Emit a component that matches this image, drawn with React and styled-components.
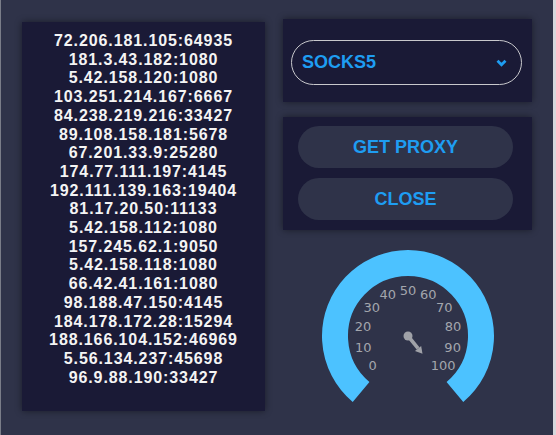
import React from 'react';
import styled, { createGlobalStyle } from 'styled-components';

const proxies = [
  '72.206.181.105:64935',
  '181.3.43.182:1080',
  '5.42.158.120:1080',
  '103.251.214.167:6667',
  '84.238.219.216:33427',
  '89.108.158.181:5678',
  '67.201.33.9:25280',
  '174.77.111.197:4145',
  '192.111.139.163:19404',
  '81.17.20.50:11133',
  '5.42.158.112:1080',
  '157.245.62.1:9050',
  '5.42.158.118:1080',
  '66.42.41.161:1080',
  '98.188.47.150:4145',
  '184.178.172.28:15294',
  '188.166.104.152:46969',
  '5.56.134.237:45698',
  '96.9.88.190:33427',
];

const ACCENT = '#1e9df2';

const GlobalStyle = createGlobalStyle`
  html, body {
    margin: 0;
    padding: 0;
    background: #2f3349;
  }
`;

const Window = styled.div`
  box-sizing: border-box;
  width: 556px;
  height: 435px;
  background: #2f3349;
  border-left: 1px solid #7a7d88;
  border-right: 3px solid #d6d7dc;
  padding: 19px 0 0 21px;
  display: grid;
  grid-template-columns: 243px 249px;
  column-gap: 18px;
  align-items: start;
  font-family: 'Liberation Sans', Arial, sans-serif;
`;

const Panel = styled.div`
  box-sizing: border-box;
  background: #1a1a36;
  box-shadow: 0 0 7px rgba(0, 0, 0, 0.45);
`;

const ListPanel = styled(Panel)`
  margin-top: 3px;
  height: 389px;
  padding-top: 10px;
  text-align: center;
`;

const ProxyLine = styled.div`
  color: #f4f4f4;
  font-size: 16px;
  font-weight: bold;
  letter-spacing: 0.9px;
  line-height: 18.7px;
`;

const SideColumn = styled.div`
  display: flex;
  flex-direction: column;
  gap: 15px;
`;

const SelectPanel = styled(Panel)`
  height: 83px;
  padding: 21px 10px 0 8px;
`;

const Select = styled.div`
  box-sizing: border-box;
  height: 45px;
  border: 1px solid #c8c8cc;
  border-radius: 23px;
  display: flex;
  align-items: center;
  justify-content: space-between;
  padding: 0 14px 0 10px;
  color: ${ACCENT};
  font-size: 18px;
  font-weight: bold;
`;

const ButtonPanel = styled(Panel)`
  height: 113px;
  padding: 9px 19px 9px 15px;
  display: flex;
  flex-direction: column;
  gap: 10px;
`;

const PillButton = styled.button`
  height: 42px;
  border: none;
  border-radius: 21px;
  background: #2f3349;
  color: ${ACCENT};
  font-family: 'Liberation Sans', Arial, sans-serif;
  font-size: 18px;
  font-weight: bold;
  cursor: pointer;
`;

const GaugeWrap = styled.div`
  display: flex;
  justify-content: center;
  margin-top: 1px;
`;

const Chevron = () => (
  <svg width="11" height="9" viewBox="0 0 11 9">
    <path d="M1.5 2.8 L5.5 6.8 L9.5 2.8" fill="none" stroke={ACCENT} strokeWidth="2.8" />
  </svg>
);

const Gauge = ({ needleAngle }) => {
  const c = 90;
  const r = 73;
  const rad = (d) => (d * Math.PI) / 180;
  const start = [c + r * Math.cos(rad(130)), c + r * Math.sin(rad(130))];
  const end = [c + r * Math.cos(rad(50)), c + r * Math.sin(rad(50))];
  const labels = Array.from({ length: 11 }, (_, i) => i * 10);

  const a = rad(needleAngle);
  const dir = [Math.cos(a), Math.sin(a)];
  const tip = [c + 23 * dir[0], c + 23 * dir[1]];
  const base = [tip[0] - 7 * dir[0], tip[1] - 7 * dir[1]];
  const perp = [-dir[1] * 4, dir[0] * 4];

  return (
    <svg width="180" height="180" viewBox="0 0 180 180">
      <path
        d={`M${start[0]} ${start[1]} A${r} ${r} 0 1 1 ${end[0]} ${end[1]}`}
        fill="none"
        stroke="#4cc2ff"
        strokeWidth="26"
      />
      {labels.map((n, i) => {
        const t = rad(140 + i * 26);
        return (
          <text
            key={n}
            x={c + 46 * Math.cos(t)}
            y={c + 46 * Math.sin(t)}
            textAnchor="middle"
            dominantBaseline="central"
            fill="#a3a6ad"
            fontSize="13"
            fontFamily="'DejaVu Sans', Verdana, sans-serif"
          >
            {n}
          </text>
        );
      })}
      <circle cx={c} cy={c} r="4.5" fill="#a0a2a8" />
      <line x1={c} y1={c} x2={base[0]} y2={base[1]} stroke="#a0a2a8" strokeWidth="3.6" />
      <polygon
        points={`${tip[0]},${tip[1]} ${base[0] + perp[0]},${base[1] + perp[1]} ${base[0] - perp[0]},${base[1] - perp[1]}`}
        fill="#a0a2a8"
      />
    </svg>
  );
};

export default function App() {
  return (
    <>
      <GlobalStyle />
      <Window>
        <ListPanel>
          {proxies.map((p) => (
            <ProxyLine key={p}>{p}</ProxyLine>
          ))}
        </ListPanel>
        <SideColumn>
          <SelectPanel>
            <Select>
              <span>SOCKS5</span>
              <Chevron />
            </Select>
          </SelectPanel>
          <ButtonPanel>
            <PillButton>GET PROXY</PillButton>
            <PillButton>CLOSE</PillButton>
          </ButtonPanel>
          <GaugeWrap>
            <Gauge needleAngle={51} />
          </GaugeWrap>
        </SideColumn>
      </Window>
    </>
  );
}
